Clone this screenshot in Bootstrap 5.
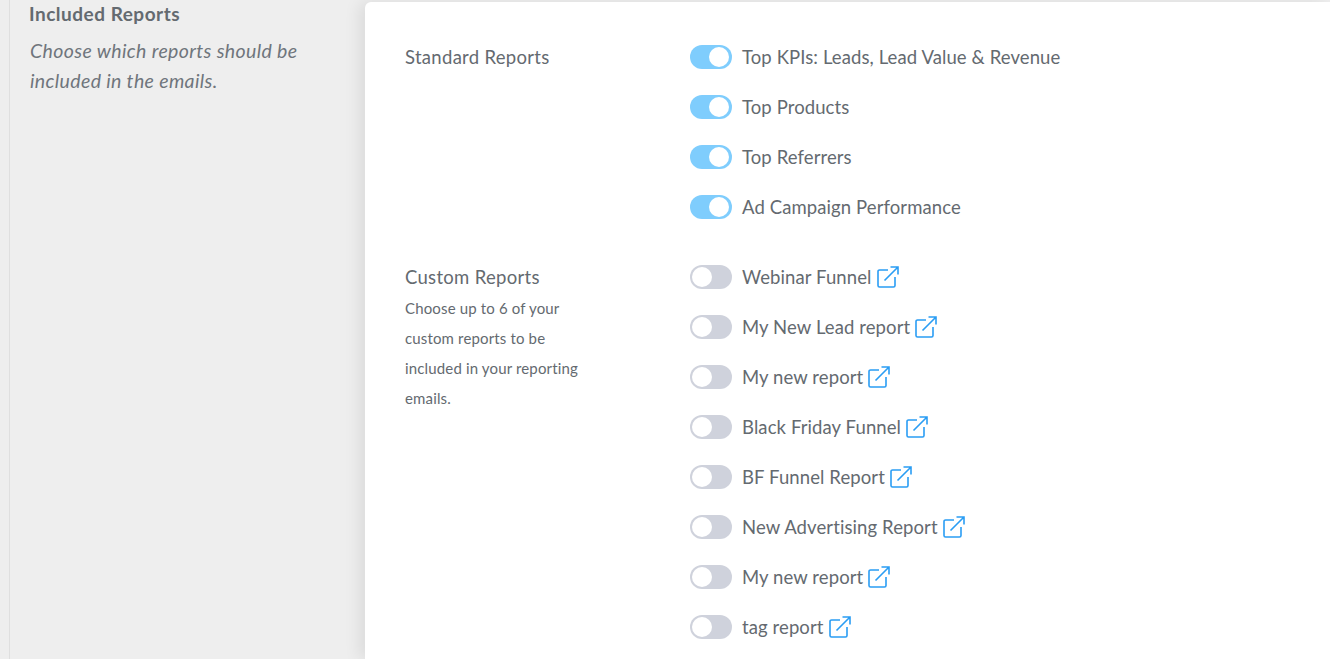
<!DOCTYPE html>
<html lang="en">
<head>
<meta charset="utf-8">
<title>Included Reports</title>
<link href="https://cdn.jsdelivr.net/npm/bootstrap@5.3.0/dist/css/bootstrap.min.css" rel="stylesheet">
<style>
html, body { height: 100%; overflow: hidden; }
body { background: #eeeeee; font-family: "Lato", "Liberation Sans", sans-serif; color: #646a70; font-size: 18.5px; }
.page-frame { height: 659px; margin-left: 9px; border-left: 1px solid #dfdfdf; padding-left: 19px; }
.side-col { width: 336px; flex: none; padding-top: 2px; }
.side-title { font-size: 19px; font-weight: 700; line-height: 24px; margin: 0; color: #646a70; letter-spacing: .5px; }
.side-text { font-style: italic; line-height: 30px; margin: 10px 0 0 1px; color: #6f757c; font-size: 19.5px; letter-spacing: .37px; width: 300px; }
.panel-box { background: #fff; flex: 1; margin-top: 2px; border-radius: 6px 0 0 0; box-shadow: -6px 0 16px rgba(0,0,0,.08); padding: 31px 0 0 40px; }
.label-col { width: 285px; flex: none; }
.group-title { line-height: 48px; height: 50px; letter-spacing: .3px; }
.group-sub { font-size: 15px; line-height: 30px; width: 190px; margin-top: -10px; letter-spacing: .15px; }
.toggle-row { height: 50px; letter-spacing: .1px; }
.report-list { margin-bottom: 20px; }
.toggle-pill { width: 42px; height: 24px; margin-top: -2px; border-radius: 12px; background: #cfd2dc; flex: none; margin-right: 10px; padding: 2px; display: flex; }
.toggle-pill.is-on { background: #7fcdfd; justify-content: flex-end; padding-right: 3px; }
.toggle-knob { width: 20px; height: 20px; border-radius: 50%; background: #fff; }
.ext-icon { width: 22px; height: 22px; margin-left: 5px; margin-top: -2px; flex: none; }
</style>
</head>
<body>
<div class="page-frame d-flex">
  <aside class="side-col">
    <h2 class="side-title">Included Reports</h2>
    <p class="side-text">Choose which reports should be included in the emails.</p>
  </aside>
  <main class="panel-box">
    <div class="d-flex">
      <div class="label-col"><div class="group-title">Standard Reports</div></div>
      <div class="report-list">
        <div class="toggle-row d-flex align-items-center"><span class="toggle-pill is-on"><span class="toggle-knob"></span></span><span>Top KPIs: Leads, Lead Value &amp; Revenue</span></div>
        <div class="toggle-row d-flex align-items-center"><span class="toggle-pill is-on"><span class="toggle-knob"></span></span><span>Top Products</span></div>
        <div class="toggle-row d-flex align-items-center"><span class="toggle-pill is-on"><span class="toggle-knob"></span></span><span>Top Referrers</span></div>
        <div class="toggle-row d-flex align-items-center"><span class="toggle-pill is-on"><span class="toggle-knob"></span></span><span>Ad Campaign Performance</span></div>
      </div>
    </div>
    <div class="d-flex">
      <div class="label-col">
        <div class="group-title">Custom Reports</div>
        <div class="group-sub">Choose up to 6 of your custom reports to be included in your reporting emails.</div>
      </div>
      <div class="report-list">
        <div class="toggle-row d-flex align-items-center"><span class="toggle-pill"><span class="toggle-knob"></span></span><span>Webinar Funnel</span><svg class="ext-icon" viewBox="0 0 22 22" fill="none" stroke="#2a9df4" stroke-width="1.6"><path d="M11 4H2.5A1.5 1.5 0 0 0 1 5.500V19.500A1.500 1.500 0 0 0 2.500 21H16.500A1.500 1.500 0 0 0 18 19.500V11"/><path d="M7.500 14.500L20.500 1.500M13.500 1H21V8.500"/></svg></div>
        <div class="toggle-row d-flex align-items-center"><span class="toggle-pill"><span class="toggle-knob"></span></span><span>My New Lead report</span><svg class="ext-icon" viewBox="0 0 22 22" fill="none" stroke="#2a9df4" stroke-width="1.6"><path d="M11 4H2.5A1.5 1.5 0 0 0 1 5.500V19.500A1.500 1.500 0 0 0 2.500 21H16.500A1.500 1.500 0 0 0 18 19.500V11"/><path d="M7.500 14.500L20.500 1.500M13.500 1H21V8.500"/></svg></div>
        <div class="toggle-row d-flex align-items-center"><span class="toggle-pill"><span class="toggle-knob"></span></span><span>My new report</span><svg class="ext-icon" viewBox="0 0 22 22" fill="none" stroke="#2a9df4" stroke-width="1.6"><path d="M11 4H2.5A1.5 1.5 0 0 0 1 5.500V19.500A1.500 1.500 0 0 0 2.500 21H16.500A1.500 1.500 0 0 0 18 19.500V11"/><path d="M7.500 14.500L20.500 1.500M13.500 1H21V8.500"/></svg></div>
        <div class="toggle-row d-flex align-items-center"><span class="toggle-pill"><span class="toggle-knob"></span></span><span>Black Friday Funnel</span><svg class="ext-icon" viewBox="0 0 22 22" fill="none" stroke="#2a9df4" stroke-width="1.6"><path d="M11 4H2.5A1.5 1.5 0 0 0 1 5.500V19.500A1.500 1.500 0 0 0 2.500 21H16.500A1.500 1.500 0 0 0 18 19.500V11"/><path d="M7.500 14.500L20.500 1.500M13.500 1H21V8.500"/></svg></div>
        <div class="toggle-row d-flex align-items-center"><span class="toggle-pill"><span class="toggle-knob"></span></span><span>BF Funnel Report</span><svg class="ext-icon" viewBox="0 0 22 22" fill="none" stroke="#2a9df4" stroke-width="1.6"><path d="M11 4H2.5A1.5 1.5 0 0 0 1 5.500V19.500A1.500 1.500 0 0 0 2.500 21H16.500A1.500 1.500 0 0 0 18 19.500V11"/><path d="M7.500 14.500L20.500 1.500M13.500 1H21V8.500"/></svg></div>
        <div class="toggle-row d-flex align-items-center"><span class="toggle-pill"><span class="toggle-knob"></span></span><span>New Advertising Report</span><svg class="ext-icon" viewBox="0 0 22 22" fill="none" stroke="#2a9df4" stroke-width="1.6"><path d="M11 4H2.5A1.5 1.5 0 0 0 1 5.500V19.500A1.500 1.500 0 0 0 2.500 21H16.500A1.500 1.500 0 0 0 18 19.500V11"/><path d="M7.500 14.500L20.500 1.500M13.500 1H21V8.500"/></svg></div>
        <div class="toggle-row d-flex align-items-center"><span class="toggle-pill"><span class="toggle-knob"></span></span><span>My new report</span><svg class="ext-icon" viewBox="0 0 22 22" fill="none" stroke="#2a9df4" stroke-width="1.6"><path d="M11 4H2.5A1.5 1.5 0 0 0 1 5.500V19.500A1.500 1.500 0 0 0 2.500 21H16.500A1.500 1.500 0 0 0 18 19.500V11"/><path d="M7.500 14.500L20.500 1.500M13.500 1H21V8.500"/></svg></div>
        <div class="toggle-row d-flex align-items-center"><span class="toggle-pill"><span class="toggle-knob"></span></span><span>tag report</span><svg class="ext-icon" viewBox="0 0 22 22" fill="none" stroke="#2a9df4" stroke-width="1.6"><path d="M11 4H2.5A1.5 1.5 0 0 0 1 5.500V19.500A1.500 1.500 0 0 0 2.500 21H16.500A1.500 1.500 0 0 0 18 19.500V11"/><path d="M7.500 14.500L20.500 1.500M13.500 1H21V8.500"/></svg></div>
      </div>
    </div>
  </main>
</div>
<script src="https://cdn.jsdelivr.net/npm/bootstrap@5.3.0/dist/js/bootstrap.bundle.min.js"></script>
</body>
</html>
